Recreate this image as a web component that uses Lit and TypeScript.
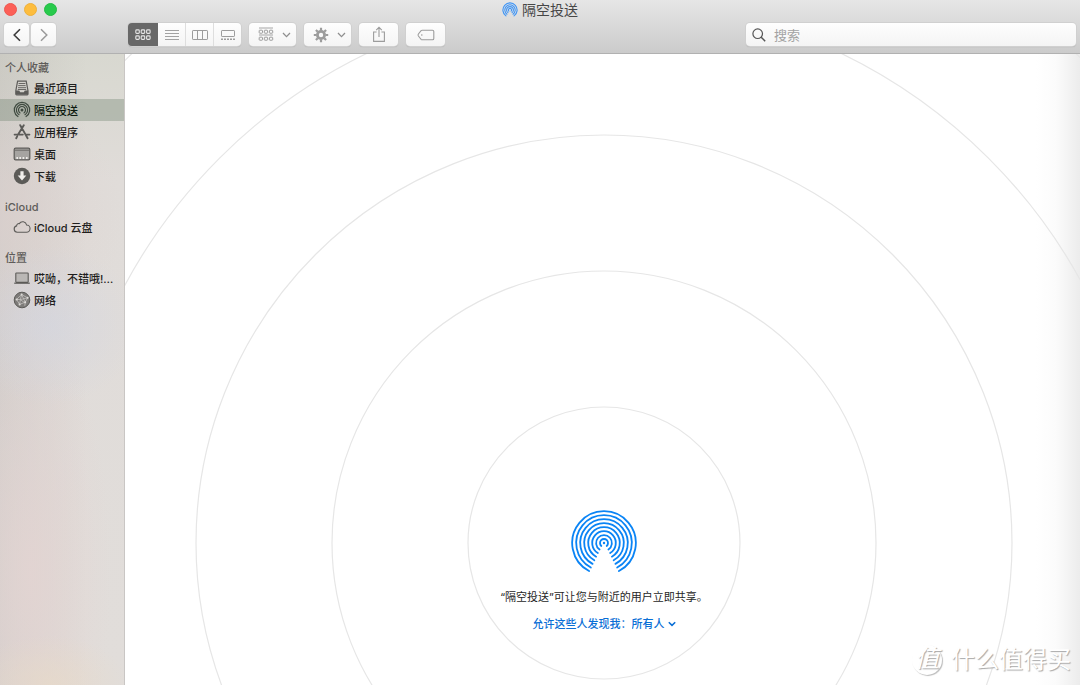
import { LitElement, html, svg, css } from "lit";
import { customElement } from "lit/decorators.js";

/** Concentric arcs, open at the bottom, as used by every size of the sharing glyph. */
function arcs(radii: number[], opening: (r: number) => number) {
  return radii.map((r) => {
    const a = (opening(r) * Math.PI) / 180;
    const x = (r * Math.sin(a)).toFixed(2);
    const y = (r * Math.cos(a)).toFixed(2);
    return svg`<path d="M-${x} ${y}A${r} ${r} 0 1 1 ${x} ${y}"/>`;
  });
}

const airdropLarge = html`<svg class="glyph" width="66" height="66" viewBox="-33 -33 66 66" stroke="#0a84f5" stroke-width="1.8" stroke-linecap="round">
  ${arcs([31.8, 27.8, 23.8, 19.8, 15.8, 11.8, 7.9, 4], (r) => 26 + 64 / r)}
  <circle r="1.2" fill="#0a84f5" stroke="none"/></svg>`;

const airdropTitle = html`<svg class="glyph" width="16" height="16" viewBox="-8 -8 16 16" stroke="#3d94f6" stroke-width="1.1" stroke-linecap="round">
  ${arcs([7.1, 5.2, 3.4, 1.6], (r) => 32 + 20 / r)}</svg>`;

const icons = {
  recents: html`<svg width="18" height="18" viewBox="0 0 18 18" fill="none" stroke="#5c5b58">
    <path d="M4.6 2.2h8.6l1.8 9.6v3.2q0 .8-.8.8H3.6q-.8 0-.8-.8v-3.2z" stroke-width="1.2" fill="#d2d0cb"/>
    <path d="M3 11.600h3.2l1 1.600h3.6l1-1.600H15v3.300q0 .7-.7.7H3.600q-.7 0-.7-.7z" fill="#5c5b58" stroke="none"/>
    <path d="M5.600 4.500h6.800M5.200 6.600h7.400M5 8.700h8M4.800 10.500h8.400" stroke-width=".9"/></svg>`,
  airdrop: html`<svg width="18" height="18" viewBox="-9 -9 18 18" fill="none" stroke="#3f4a40" stroke-width="1.2" stroke-linecap="round">
    ${arcs([7.7, 5.6, 3.5], (r) => 30 + 14 / r)}<circle r="1.5" fill="#3f4a40" stroke="none"/></svg>`,
  apps: html`<svg width="18" height="18" viewBox="0 0 18 18" fill="none" stroke="#5c5b58" stroke-width="1.9" stroke-linecap="round">
    <path d="M7.2 2.2l1.7 3M10.8 2.2L5.4 11M9.6 6.4l5 8.8M1.6 11.6h8.2M13 11.6h3.4M4.2 13.4l-1 1.8"/></svg>`,
  desktop: html`<svg width="18" height="18" viewBox="0 0 18 18" fill="none" stroke="#5c5b58">
    <rect x="1.2" y="3.2" width="15.6" height="11.6" rx="1.4" fill="#a6a4a1" stroke-width="1.2"/>
    <path d="M2 5.2h14" stroke-width=".8"/>
    <path d="M3.4 13h1.6M6.4 13h1.6M9.6 13h1.6M13 13h1.6" stroke="#efedea" stroke-width="1.8"/></svg>`,
  downloads: html`<svg width="18" height="18" viewBox="0 0 18 18"><circle cx="9" cy="9" r="8.2" fill="#5c5b58"/>
    <path d="M7.4 4.2h3.2v4.4h2.7L9 13.6 4.7 8.6h2.7z" fill="#f0eeeb"/></svg>`,
  cloud: html`<svg width="18" height="18" viewBox="0 0 18 18" fill="none" stroke="#5c5b58" stroke-width="1.1">
    <path d="M4.3 14.2a3.2 3.2 0 0 1-.7-6.3 2.3 2.3 0 0 1 2.7-2.3 4 4 0 0 1 7.3 1.4 3.6 3.6 0 0 1-.3 7.2z"/></svg>`,
  laptop: html`<svg width="18" height="18" viewBox="0 0 18 18" fill="none" stroke="#5c5b58">
    <rect x="2.8" y="4" width="12.4" height="9.4" rx=".6" fill="#bab7b5" stroke-width="1.1"/>
    <path d="M1.2 14.2h15.6" stroke-width="1.2"/></svg>`,
  network: html`<svg width="18" height="18" viewBox="0 0 18 18" fill="none"><circle cx="9" cy="9" r="7.8" fill="#7d7b79" stroke="#5c5b58"/>
    <path d="M8.6 3.6L3.6 8.4l3 5 5.6-2.2 2.4-4.4-6-3.2-1.2 5 4.8 3.6M3.6 8.4l3.8.2 7.2-1.8M6.6 13.4l.8-4.8M12.2 11.2l-.4 3.6M8.6 3.6l3.6 7.6" stroke="#c4c2bf" stroke-width=".8"/>
    <g fill="#dddbd8"><circle cx="8.6" cy="3.6" r="1"/><circle cx="3.6" cy="8.4" r="1"/><circle cx="6.6" cy="13.4" r="1"/><circle cx="12.2" cy="11.2" r="1"/><circle cx="14.6" cy="6.8" r="1"/></g></svg>`,
  back: html`<svg width="10" height="14" viewBox="0 0 10 14" fill="none" stroke="#3c3c3c" stroke-width="1.6"><path d="M8 1.2L2.2 7 8 12.8"/></svg>`,
  forward: html`<svg width="10" height="14" viewBox="0 0 10 14" fill="none" stroke="#9a9a9a" stroke-width="1.5"><path d="M2 1.2L7.8 7 2 12.8"/></svg>`,
  grid: html`<svg width="16" height="12" viewBox="0 0 16 12" fill="none" stroke="#e6e6e6" stroke-width="1.1">
    ${[0, 6].map((y) => [0, 5.4, 10.8].map((x) => svg`<rect x=${x + 0.8} y=${y + 0.9} width="3.5" height="3.5" rx=".9"/>`))}</svg>`,
  list: html`<svg width="16" height="12" viewBox="0 0 16 12" stroke="#a2a2a2"><path d="M1 1.5h14M1 4.5h14M1 7.5h14M1 10.5h14"/></svg>`,
  columns: html`<svg width="18" height="12" viewBox="0 0 18 12" fill="none" stroke="#9c9c9c"><rect x="1.5" y="1.5" width="15" height="9" rx=".6"/><path d="M6.5 1.5v9M11.5 1.5v9"/></svg>`,
  gallery: html`<svg width="16" height="12" viewBox="0 0 16 12" fill="none" stroke="#9c9c9c"><rect x="1.5" y="1.5" width="13" height="6" rx=".6"/><path d="M1 10.2h14" stroke-width="1.5" stroke-dasharray="2 1"/></svg>`,
  arrange: html`<svg width="16" height="15" viewBox="0 0 16 15" fill="none" stroke="#9c9c9c">
    <path d="M1 1h14M1 8h14" stroke-width=".9"/>
    ${[3.2, 10.2].map((y) => [1.2, 6.3, 11.4].map((x) => svg`<rect x=${x} y=${y} width="3.3" height="3" rx=".6"/>`))}</svg>`,
  gear: html`<svg width="16" height="16" viewBox="-8 -8 16 16" fill="none" stroke="#9c9c9c">
    <circle r="3.6" stroke-width="2.8"/>
    ${[0, 45, 90, 135].map((a) => svg`<path d="M0-7.2V-4.6M0 4.6V7.2" stroke-width="2.2" transform="rotate(${a})"/>`)}</svg>`,
  chevron: html`<svg width="9" height="6" viewBox="0 0 9 6" fill="none" stroke="#8f8f8f" stroke-width="1.3"><path d="M1 1l3.5 3.6L8 1"/></svg>`,
  share: html`<svg width="14" height="17" viewBox="0 0 14 17" fill="none" stroke="#9c9c9c" stroke-width="1.1"><path d="M4.6 6H1.6v9.4h10.8V6H9.4M7 11V1.4M4.2 4.2L7 1.4l2.8 2.8"/></svg>`,
  tag: html`<svg width="18" height="12" viewBox="0 0 18 12" fill="none" stroke="#9c9c9c" stroke-width="1.1"><path d="M5.2 1.2h10.3q1.3 0 1.3 1.3v7q0 1.3-1.3 1.3H5.2Q4.6 10.8 4.1 10.3L1.4 7Q.7 6 1.4 5L4.1 1.7Q4.6 1.2 5.2 1.2z"/><circle cx="4.8" cy="6" r=".8" fill="#9c9c9c" stroke="none"/></svg>`,
  search: html`<svg width="14" height="14" viewBox="0 0 14 14" fill="none" stroke="#555" stroke-width="1.2"><circle cx="5.7" cy="5.7" r="4.8"/><path d="M9.2 9.2l4 4" stroke-width="1.5"/></svg>`,
};

const sections = [
  {
    title: "个人收藏",
    items: [
      { icon: icons.recents, label: "最近项目" },
      { icon: icons.airdrop, label: "隔空投送", selected: true },
      { icon: icons.apps, label: "应用程序" },
      { icon: icons.desktop, label: "桌面" },
      { icon: icons.downloads, label: "下载" },
    ],
  },
  { title: "iCloud", items: [{ icon: icons.cloud, label: "iCloud 云盘" }] },
  {
    title: "位置",
    items: [
      { icon: icons.laptop, label: "哎呦，不错哦!…" },
      { icon: icons.network, label: "网络" },
    ],
  },
];

@customElement("finder-toolbar")
export class FinderToolbar extends LitElement {
  static styles = css`
    :host { display: block; }
    svg { display: block; flex: none; }
    .bar {
      background: linear-gradient(#e6e6e6, #cbcbcb);
      border-bottom: 1px solid #b1b1b1;
      height: 53px;
      display: flex;
      flex-direction: column;
      gap: 4px;
    }
    .top { display: grid; grid-template-columns: 1fr auto 1fr; align-items: center; height: 19px; padding: 0 4px; }
    .lights { display: flex; gap: 7px; }
    .light { width: 13px; height: 13px; border-radius: 50%; border: 1px solid; box-sizing: border-box; padding: 0; }
    .close { background: #fc6058; border-color: #ee5850; }
    .minimise { background: #fdbd3e; border-color: #eeb03a; }
    .zoom { background: #28ca4c; border-color: #24bb44; }
    .title { display: flex; align-items: center; gap: 4px; font-size: 14px; font-weight: 400; line-height: 18px; color: #464646; margin: 0; }
    .glyph { fill: none; }
    .tools { display: flex; height: 23px; padding: 0 4px; }
    button { font: inherit; }
    .button {
      display: flex; align-items: center; justify-content: center;
      box-sizing: border-box; height: 23px; padding: 0;
      border: 0; border-radius: 4px;
      background: linear-gradient(#fefefe, #f4f4f4);
      box-shadow: 0 0 0 1px #d0d0d0, 0 1px 1px #a4a4a4;
    }
    .nav { display: flex; gap: 2px; margin-right: 72px; }
    .nav .button { width: 25px; }
    .views { display: flex; width: 113px; border-radius: 4px; box-shadow: 0 0 0 1px #d0d0d0, 0 1px 1px #a4a4a4; }
    .view { flex: 1; box-shadow: none; border-radius: 0; border-right: 1px solid #dedede; }
    .view:last-child { border-right: 0; border-radius: 0 4px 4px 0; }
    .view.on { flex: 0 0 30px; background: #686868; border: 0; border-radius: 4px 0 0 4px; }
    .actions { display: flex; gap: 8px; margin-left: 8px; }
    .menu { width: 47px; gap: 8px; padding-left: 4px; }
    .action { width: 39px; }
    .search {
      flex: 0 1 330px; margin-left: auto; min-width: 80px;
      justify-content: flex-start; gap: 8px; padding: 0 6px;
    }
    .field {
      flex: 1; min-width: 0; border: 0; outline: 0; padding: 0; background: none;
      font: inherit; font-size: 13px; line-height: 20px; color: #333;
    }
    .field::placeholder { color: #a3a3a3; opacity: 1; }
  `;

  render() {
    return html`<header class="bar">
      <div class="top">
        <div class="lights">
          <button class="light close" aria-label="关闭"></button>
          <button class="light minimise" aria-label="最小化"></button>
          <button class="light zoom" aria-label="缩放"></button>
        </div>
        <h1 class="title">${airdropTitle}隔空投送</h1>
      </div>
      <div class="tools">
        <div class="nav">
          <button class="button" aria-label="后退">${icons.back}</button>
          <button class="button" aria-label="前进">${icons.forward}</button>
        </div>
        <div class="views" role="group" aria-label="显示">
          <button class="button view on" aria-label="图标" aria-pressed="true">${icons.grid}</button>
          <button class="button view" aria-label="列表">${icons.list}</button>
          <button class="button view" aria-label="分栏">${icons.columns}</button>
          <button class="button view" aria-label="画廊">${icons.gallery}</button>
        </div>
        <div class="actions">
          <button class="button menu" aria-label="排列">${icons.arrange}${icons.chevron}</button>
          <button class="button menu" aria-label="操作">${icons.gear}${icons.chevron}</button>
          <button class="button action" aria-label="共享">${icons.share}</button>
          <button class="button action" aria-label="标签">${icons.tag}</button>
        </div>
        <label class="button search">${icons.search}<input class="field" type="text" placeholder="搜索" aria-label="搜索" /></label>
      </div>
    </header>`;
  }
}

@customElement("finder-sidebar")
export class FinderSidebar extends LitElement {
  static styles = css`
    :host { display: flex; flex: none; }
    svg { display: block; flex: none; }
    .side {
      box-sizing: border-box; width: 125px; padding: 6px 0;
      display: flex; flex-direction: column; gap: 12px;
      border-right: 1px solid #c9c6c4;
      background:
        radial-gradient(ellipse 80px 50px at 40% 100%, rgba(232, 218, 200, 0.7), transparent),
        radial-gradient(ellipse 90px 80px at 40% 43%, rgba(212, 214, 224, 0.7), transparent),
        radial-gradient(ellipse 80px 260px at 25% 82%, rgba(228, 212, 210, 0.8), transparent),
        radial-gradient(ellipse 110px 130px at 10% 26%, rgba(220, 208, 205, 0.6), transparent),
        linear-gradient(90deg, rgba(90, 80, 80, 0.1), transparent 70%),
        linear-gradient(#d8d8d0, #e0dcd9 20%, #e1ddda);
    }
    .heading { margin: 0; padding-left: 5px; font-size: 11px; font-weight: 500; line-height: 17px; color: #5e5c59; }
    .list { list-style: none; margin: 0; padding: 0; }
    .row {
      display: flex; align-items: center; gap: 3px; height: 22px; padding: 0 5px 0 13px;
      font-size: 11px; font-weight: 500; color: #1f1e1d; text-decoration: none; white-space: nowrap;
    }
    .row.selected { background: rgba(112, 130, 110, 0.36); color: #0d1a0f; }
  `;

  render() {
    return html`<nav class="side">
      ${sections.map(
        (s) => html`<section>
          <h2 class="heading">${s.title}</h2>
          <ul class="list">
            ${s.items.map(
              (i: any) => html`<li><a class="row ${i.selected ? "selected" : ""}" href="#">${i.icon}<span>${i.label}</span></a></li>`,
            )}
          </ul>
        </section>`,
      )}
    </nav>`;
  }
}

@customElement("airdrop-panel")
export class AirdropPanel extends LitElement {
  static styles = css`
    :host { display: flex; flex: 1; min-width: 0; }
    svg { display: block; flex: none; }
    .panel {
      flex: 1; position: relative; overflow: hidden; box-sizing: border-box;
      display: flex; flex-direction: column; align-items: center; justify-content: flex-end;
      padding: 0 0 52px 3px;
      background: linear-gradient(270deg, #ececec, #fbfbfb 24px, #fff 44px);
    }
    .beacon { position: relative; }
    .rings { position: absolute; top: 50%; left: 50%; transform: translate(-50%, -50%); fill: none; stroke: #e6e6e6; }
    .glyph { position: relative; fill: none; }
    .message { position: relative; margin: 12px 0 9px; font-size: 11px; line-height: 18px; color: #262626; }
    .discover { position: relative; display: flex; align-items: center; font-size: 11px; font-weight: 500; line-height: 18px; color: #0a6fd6; }
    .who { appearance: none; border: 0; padding: 0; margin: 0; background: none; font: inherit; color: inherit; line-height: 18px; }
    .caret { margin-left: 3px; }
    .mark { position: absolute; right: 9px; bottom: 9px; display: flex; align-items: center; gap: 9px; color: #fff; font-size: 24px; line-height: 32px; text-shadow: 1px 1px 1px #a8a8a8; }
    .seal {
      width: 30px; height: 30px; border-radius: 50%; font-style: italic; line-height: 28px; text-align: center;
      box-shadow: 1px 1px 1px #bcbcbc;
    }
  `;

  render() {
    return html`<main class="panel">
      <div class="beacon">
        <svg class="rings" width="1362" height="1362" viewBox="-681 -681 1362 1362">
          ${[136, 272, 408, 544, 680].map((r) => svg`<circle r=${r} stroke-width="1.2"/>`)}
        </svg>
        ${airdropLarge}
      </div>
      <p class="message">“隔空投送”可让您与附近的用户立即共享。</p>
      <div class="discover">
        <label for="who">允许这些人发现我：</label>
        <select class="who" id="who"><option>所有人</option></select>
        <svg class="caret" width="8" height="6" viewBox="0 0 8 6" fill="none" stroke="#0a6fd6" stroke-width="1.6"><path d="M.8 1.2L4 4.4l3.200-3.200"/></svg>
      </div>
      <div class="mark"><span class="seal">值</span><span>什么值得买</span></div>
    </main>`;
  }
}

@customElement("app-root")
export class AppRoot extends LitElement {
  static styles = css`
    :host {
      display: flex; flex-direction: column; min-height: 100vh;
      font-family: Inter, "Noto Sans CJK SC", sans-serif;
    }
    .body { flex: 1; display: flex; }
  `;

  render() {
    return html`<finder-toolbar></finder-toolbar>
      <div class="body"><finder-sidebar></finder-sidebar><airdrop-panel></airdrop-panel></div>`;
  }
}
